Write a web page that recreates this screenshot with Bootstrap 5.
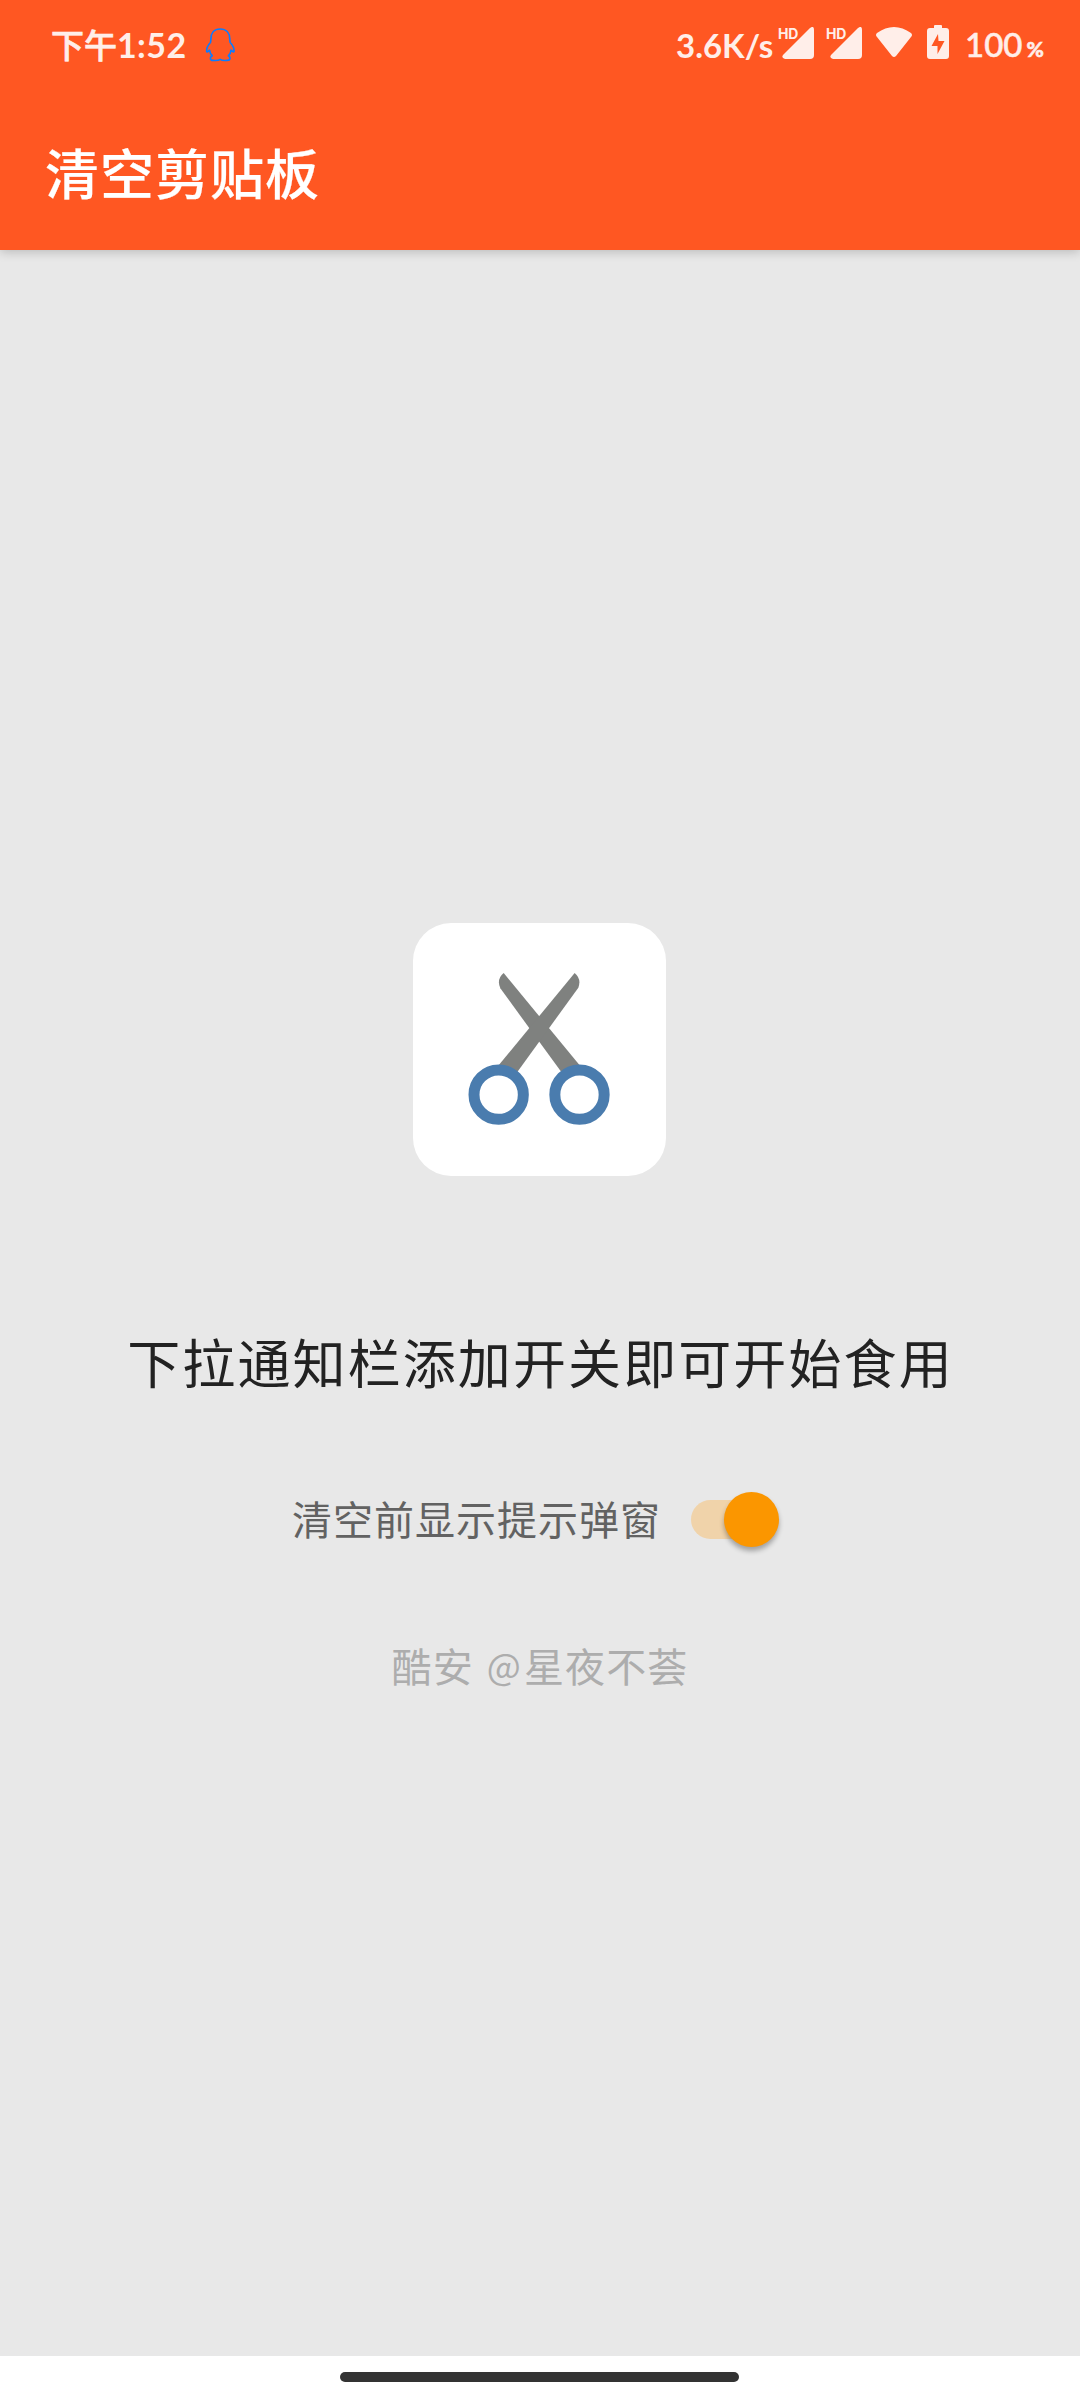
<!DOCTYPE html>
<html lang="zh-CN">
<head>
<meta charset="utf-8">
<meta name="viewport" content="width=device-width, initial-scale=1">
<title>清空剪贴板</title>
<link href="https://cdn.jsdelivr.net/npm/bootstrap@5.3.0/dist/css/bootstrap.min.css" rel="stylesheet">
<style>
body{width:1080px;height:2400px;background:#e8e8e8;font-family:"Noto Sans CJK SC",sans-serif;overflow:hidden}
svg{display:block;flex:none}
.app-top{height:250px;background:#ff5722;box-shadow:0 2px 10px rgba(0,0,0,.2)}
.status{height:88px;padding-left:51px;color:#ffeee9;line-height:40px}
.latin{font-family:Lato,sans-serif}
.clock{font-size:33px;font-weight:500;padding-top:24px;width:154px;-webkit-text-stroke:.7px #ffeee9}
.clock .latin{font-size:34px;font-weight:700;letter-spacing:.4px;-webkit-text-stroke:0}
.speed{font-size:33px;font-weight:700;padding-top:25px;width:102px}
.hd{font-family:Inter,sans-serif;font-size:14px;font-weight:700;line-height:14px;top:27px;left:0;letter-spacing:-.2px}
.signal{width:48px;height:60px}
.signal svg{margin:27px 0 0 4px}
.level{font-size:33px;padding-top:24px;font-weight:500;-webkit-text-stroke:.5px #ffeee9}
.level small{font-size:21px;font-weight:900}
.app-title{font-size:54px;line-height:80px;letter-spacing:1px;font-weight:500;padding:44px 0 0 45px;-webkit-text-stroke:.2px #fff}
.tile{width:253px;height:253px;border-radius:38px;margin:673px 1px 0 0}
.headline{font-size:53px;letter-spacing:2.1px;line-height:80px;color:#222;margin-top:145px;padding-left:1px}
.option{height:60px;margin-top:88px;padding-right:19px}
.option-text{font-size:40px;letter-spacing:1px;line-height:60px;color:#626262;margin-top:-3px}
.track{width:78px;height:39px;border-radius:20px;background:#f0d3aa;margin-left:30px}
.thumb{width:55px;height:55px;background:#fb9600;top:-8px;left:33px;box-shadow:0 4px 5px rgba(0,0,0,.3)}
.author{font-size:40px;letter-spacing:1.1px;line-height:60px;color:#adadad;margin-top:86px}
.at-sign{font-size:36px;margin:0 2px 0 3px;vertical-align:2px;line-height:1}
.gesture{height:44px}
.pill{width:399px;height:10px;background:#333;margin:-3px 1px 0 0}
</style>
</head>
<body class="d-flex flex-column">
<header class="app-top flex-shrink-0 position-relative">
  <div class="status d-flex align-items-start text-nowrap">
    <div class="clock">下午<span class="latin">1:52</span></div>
    <svg style="margin-top:27px" width="31" height="35" viewBox="524 50 92 106" fill="none" stroke="#0b7cff" stroke-width="5" stroke-linejoin="round"><path d="M569 56C550 56 541 69 541 86L540 96C532 105 527 116 528 124C530 128 534 122 537 120C538 129 541 134 545 137C537 141 537 151 548 151C558 152 565 151 569 148C573 151 580 152 590 151C601 151 601 141 594 137C598 134 601 129 602 120C605 122 609 128 611 124C612 116 607 105 599 96L598 86C598 69 588 56 569 56Z"/></svg>
    <div class="speed latin ms-auto">3.6K/s</div>
    <div class="signal position-relative"><span class="hd position-absolute">HD</span><svg width="32" height="32" viewBox="0 0 32 32"><path fill="#ffeee9" d="M1 28L28 1Q32-2 32 3V28Q32 32 28 32H3Q-1 31 1 28Z"/></svg></div>
    <div class="signal position-relative"><span class="hd position-absolute">HD</span><svg width="32" height="32" viewBox="0 0 32 32"><path fill="#ffeee9" d="M1 28L28 1Q32-2 32 3V28Q32 32 28 32H3Q-1 31 1 28Z"/></svg></div>
    <svg style="margin:27px 0 0 2px" width="36" height="31" viewBox="0 0 36 31"><path fill="#ffeee9" d="M1 6C12-2 24-2 35 6Q37 8 35 10L20 29Q18 31 16 29L1 10Q-1 8 1 6Z"/></svg>
    <svg style="margin:25px 0 0 15px" width="22" height="34" viewBox="0 0 22 34"><path fill="#ffeee9" d="M7 1Q7 0 8 0H14Q15 0 15 1V3H19Q22 3 22 6V31Q22 34 19 34H3Q0 34 0 31V6Q0 3 3 3H7Z"/><path fill="#ff5722" d="M11 9L4.500 21H10.500V29L17.500 16H11.500Z"/></svg>
    <div class="level latin" style="margin-left:16px;width:115px">100<small style="margin-left:4px">%</small></div>
  </div>
  <h1 class="app-title text-white mb-0">清空剪贴板</h1>
</header>
<main class="flex-grow-1 d-flex flex-column align-items-center text-nowrap">
  <div class="tile bg-white flex-shrink-0">
    <svg width="253" height="253" viewBox="40 40 759 759"><g fill="#7f817f"><path d="M312 190L540 467L520 500L485 487L302 236Q290 208 312 190Z"/><path d="M525 190L297 467L317 500L353 487L536 234Q546 208 525 190Z"/></g><g fill="#fff" stroke="#4a7cae" stroke-width="33"><circle cx="297" cy="555" r="74"/><circle cx="539.500" cy="555" r="74"/></g></svg>
  </div>
  <div class="headline">下拉通知栏添加开关即可开始食用</div>
  <div class="option d-flex align-items-center">
    <label class="option-text" for="hint">清空前显示提示弹窗</label>
    <div id="hint" class="track position-relative" role="switch" aria-checked="true"><span class="thumb position-absolute rounded-circle"></span></div>
  </div>
  <div class="author">酷安 <span class="at-sign">@</span>星夜不荟</div>
</main>
<footer class="gesture bg-white d-flex align-items-center justify-content-center flex-shrink-0"><div class="pill rounded-pill"></div></footer>
<script src="https://cdn.jsdelivr.net/npm/bootstrap@5.3.0/dist/js/bootstrap.bundle.min.js"></script>
</body>
</html>
